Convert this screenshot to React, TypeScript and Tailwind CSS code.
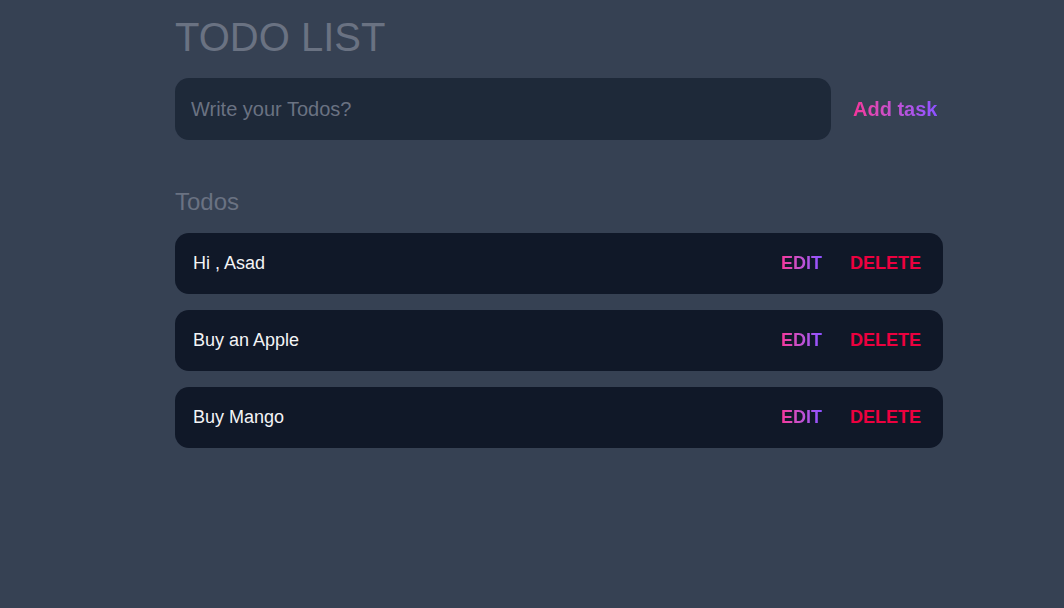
import { useState } from 'react';

const gradient = 'bg-gradient-to-r from-pink-500 to-violet-500 bg-clip-text text-transparent';

const App = () => {
  const [text, setText] = useState('');
  const [todos] = useState(['Hi , Asad', 'Buy an Apple', 'Buy Mango']);

  return (
    <div className="min-h-screen bg-gray-700 pt-[13px] font-['Liberation_Sans',Arial,sans-serif]">
      <div className="ml-[175px] w-[768px]">
        <h1 className="text-[40px] leading-[48px] text-gray-500">TODO LIST</h1>

        <div className="mt-[17px] flex items-center">
          <input
            value={text}
            onChange={(e) => setText(e.target.value)}
            placeholder="Write your Todos?"
            className="h-[62px] w-[656px] rounded-[14px] bg-gray-800 px-4 text-xl text-gray-200 outline-none placeholder:text-gray-500"
          />
          <button className={`ml-[22px] text-xl font-bold ${gradient}`}>Add task</button>
        </div>

        <h2 className="mt-[46px] mb-[15px] text-2xl leading-8 text-gray-500">Todos</h2>

        <ul className="flex flex-col gap-4">
          {todos.map((todo, i) => (
            <li
              key={i}
              className="flex h-[61px] items-center justify-between rounded-[14px] bg-gray-900 pb-[2px] pl-[18px] pr-[22px]"
            >
              <span className="text-lg text-gray-100">{todo}</span>
              <div className="flex items-center gap-[28px]">
                <button className={`text-lg font-bold ${gradient}`}>EDIT</button>
                <button className="text-lg font-bold text-rose-600">DELETE</button>
              </div>
            </li>
          ))}
        </ul>
      </div>
    </div>
  );
};

export default App;
